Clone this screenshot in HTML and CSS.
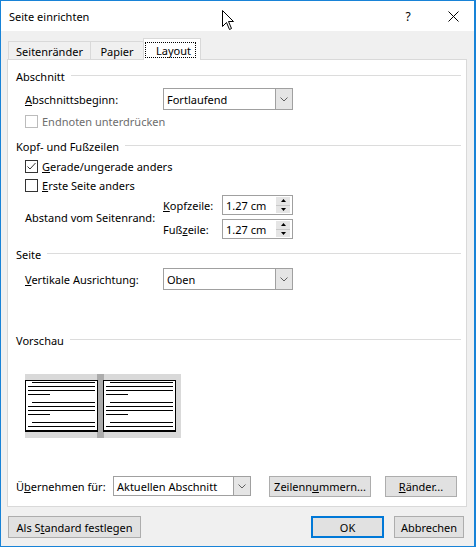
FILE: index.html
```html
<!DOCTYPE html>
<html lang="de">
<head>
<meta charset="utf-8">
<title>Seite einrichten</title>
<link rel="stylesheet" href="styles.css">
</head>
<body>
<div class="window">
  <div class="titlebar">
    <span class="title">Seite einrichten</span>
    <span class="cap-btn help">?</span>
    <span class="cap-btn close"><svg width="11" height="11" viewBox="0 0 11 11"><path d="M0.5 0.5L10.5 10.5M10.5 0.5L0.5 10.5" stroke="#000" stroke-width="1" fill="none"/></svg></span>
  </div>
  <div class="client">
    <div class="tabs">
      <div class="tab first">Seitenränder</div>
      <div class="tab mid">Papier</div>
      <div class="tab active"><span class="focus">Layout</span></div>
    </div>
    <div class="panel">
      <div class="group-head">Abschnitt</div>
      <div class="row r-sel1 indent">
        <span class="lbl"><u>A</u>bschnittsbeginn:</span>
        <div class="combo c130"><span class="combo-text">Fortlaufend</span><span class="combo-btn"><svg width="8" height="5" viewBox="0 0 8 5"><path d="M0.5 0.5L4 4L7.5 0.5" stroke="#606060" fill="none"/></svg></span></div>
      </div>
      <div class="row r-cb1 indent disabled">
        <span class="cb dis"></span><span>Endnoten unterdrücken</span>
      </div>

      <div class="group-head g2">Kopf- und Fußzeilen</div>
      <div class="row r-cb2 indent">
        <span class="cb"><svg width="11" height="11" viewBox="0 0 11 11"><path d="M1.5 5.5L4 8L9.5 2" stroke="#333" stroke-width="1" fill="none"/></svg></span><span><u>G</u>erade/ungerade anders</span>
      </div>
      <div class="row r-cb3 indent">
        <span class="cb"></span><span><u>E</u>rste Seite anders</span>
      </div>
      <div class="abstand indent">
        <span class="abstand-lbl">Abstand vom Seitenrand:</span>
        <span class="sub-lbl"><u>K</u>opfzeile:</span>
        <div class="spin"><span class="spin-text">1.27 cm</span><span class="spin-btns"><span class="spin-half up"><svg width="5" height="3" viewBox="0 0 5 3"><path d="M0 3L2.5 0L5 3Z" fill="#000"/></svg></span><span class="spin-half down"><svg width="5" height="3" viewBox="0 0 5 3"><path d="M0 0L2.5 3L5 0Z" fill="#000"/></svg></span></span></div>
        <span class="sub-lbl">Fuß<u>z</u>eile:</span>
        <div class="spin"><span class="spin-text">1.27 cm</span><span class="spin-btns"><span class="spin-half up"><svg width="5" height="3" viewBox="0 0 5 3"><path d="M0 3L2.5 0L5 3Z" fill="#000"/></svg></span><span class="spin-half down"><svg width="5" height="3" viewBox="0 0 5 3"><path d="M0 0L2.5 3L5 0Z" fill="#000"/></svg></span></span></div>
      </div>

      <div class="group-head g3">Seite</div>
      <div class="row r-sel2 indent">
        <span class="lbl"><u>V</u>ertikale Ausrichtung:</span>
        <div class="combo c130"><span class="combo-text">Oben</span><span class="combo-btn"><svg width="8" height="5" viewBox="0 0 8 5"><path d="M0.5 0.5L4 4L7.5 0.5" stroke="#606060" fill="none"/></svg></span></div>
      </div>

      <div class="group-head g4">Vorschau</div>
      <div class="preview indent">
        <svg width="156" height="64" viewBox="0 0 156 64" shape-rendering="crispEdges">
          <rect x="0" y="0" width="156" height="64" fill="#d9d9d9"/>
          <rect x="72" y="0" width="7" height="64" fill="#acacac"/>
          <g>
            <rect x="0" y="6" width="73" height="52" fill="#000"/>
            <rect x="1" y="7" width="71" height="49" fill="#fff"/>
            <rect x="7" y="8" width="63" height="1" fill="#000"/>
            <rect x="3" y="12" width="67" height="1" fill="#000"/>
            <rect x="3" y="16" width="67" height="1" fill="#000"/>
            <rect x="3" y="20" width="22" height="1" fill="#000"/>
            <rect x="7" y="28" width="63" height="1" fill="#000"/>
            <rect x="3" y="32" width="67" height="1" fill="#000"/>
            <rect x="3" y="36" width="67" height="1" fill="#000"/>
            <rect x="3" y="40" width="22" height="1" fill="#000"/>
            <rect x="7" y="48" width="63" height="1" fill="#000"/>
            <rect x="3" y="52" width="67" height="1" fill="#000"/>
          </g>
          <g transform="translate(78 0)">
            <rect x="0" y="6" width="73" height="52" fill="#000"/>
            <rect x="1" y="7" width="71" height="49" fill="#fff"/>
            <rect x="7" y="8" width="63" height="1" fill="#000"/>
            <rect x="3" y="12" width="67" height="1" fill="#000"/>
            <rect x="3" y="16" width="67" height="1" fill="#000"/>
            <rect x="3" y="20" width="22" height="1" fill="#000"/>
            <rect x="7" y="28" width="63" height="1" fill="#000"/>
            <rect x="3" y="32" width="67" height="1" fill="#000"/>
            <rect x="3" y="36" width="67" height="1" fill="#000"/>
            <rect x="3" y="40" width="22" height="1" fill="#000"/>
            <rect x="7" y="48" width="63" height="1" fill="#000"/>
            <rect x="3" y="52" width="67" height="1" fill="#000"/>
          </g>
        </svg>
      </div>

      <div class="row r-apply">
        <span class="apply-lbl">Ü<u>b</u>ernehmen für:</span>
        <div class="combo c138"><span class="combo-text">Aktuellen Abschnitt</span><span class="combo-btn"><svg width="8" height="5" viewBox="0 0 8 5"><path d="M0.5 0.5L4 4L7.5 0.5" stroke="#606060" fill="none"/></svg></span></div>
        <span class="btn b-zeilen">Zeilenn<u>u</u>mmern...</span>
        <span class="btn b-raender"><u>R</u>änder...</span>
      </div>
    </div>
    <div class="footer">
      <span class="btn b-standard">Als S<u>t</u>andard festlegen</span>
      <span class="btn default b-ok">OK</span>
      <span class="btn b-cancel">Abbrechen</span>
    </div>
  </div>
  <svg class="cursor" width="13" height="21" viewBox="0 0 13 21"><path d="M0.5 0.5L0.5 16.5L4.5 12.5L7.5 19.5L9.5 18.5L6.5 11.5L11.5 11.5Z" fill="#fff" stroke="#000" stroke-width="1" stroke-linejoin="miter"/></svg>
</div>
</body>
</html>
```

FILE: styles.css
```css
* {
  box-sizing: border-box;
}

html, body {
  margin: 0;
  padding: 0;
}

body {
  width: 476px;
  height: 547px;
  overflow: hidden;
  font-family: "Noto Sans", "Segoe UI", sans-serif;
  font-size: 11px;
  color: #000;
  background: #fff;
}

u {
  text-decoration: underline;
  text-underline-offset: 1px;
}

.window {
  position: relative;
  width: 476px;
  height: 547px;
  border: 1px solid #1883d7;
  border-right-width: 2px;
  background: #f0f0f0;
  display: flex;
  flex-direction: column;
}

.titlebar {
  flex: none;
  height: 30px;
  background: #fff;
  display: flex;
  align-items: center;
}

.title {
  flex: 1;
  padding-left: 8px;
  font-size: 11px;
}

.cap-btn {
  display: flex;
  align-items: center;
  justify-content: center;
  height: 30px;
}

.help {
  width: 48px;
  font-size: 12px;
}

.close {
  width: 42px;
}

.client {
  flex: 1;
  padding: 7px 0 0 6px;
  display: flex;
  flex-direction: column;
}

/* Tabs */
.tabs {
  position: relative;
  z-index: 1;
  display: flex;
  align-items: flex-end;
  height: 22px;
  margin-bottom: -1px;
  padding-left: 1px;
}

.tab {
  height: 19px;
  border: 1px solid #d9d9d9;
  border-left: none;
  background: #f0f0f0;
  display: flex;
  align-items: center;
  justify-content: center;
  padding-top: 1px;
}

.tab.first {
  width: 83px;
  border-left: 1px solid #d9d9d9;
}

.tab.mid {
  width: 53px;
}

.tab.active {
  width: 58px;
  height: 22px;
  margin-left: -1px;
  border-left: 1px solid #d9d9d9;
  border-bottom: none;
  background: #fff;
  justify-content: flex-start;
  align-items: flex-start;
  padding: 3px 0 0 1px;
}

.focus {
  display: flex;
  align-items: center;
  height: 16px;
  padding: 0 4px 0 10px;
  border: 1px dotted #000;
}

/* Panel */
.panel {
  width: 460px;
  height: 448px;
  border: 1px solid #d9d9d9;
  background: #fff;
  padding: 8px 5px 0 8px;
  display: flex;
  flex-direction: column;
}

.group-head {
  display: flex;
  align-items: center;
  height: 16px;
  gap: 6px;
}

.group-head::after {
  content: "";
  flex: 1;
  height: 1px;
  background: #dcdcdc;
  margin-top: -1px;
}

.g2 { margin-top: 9px; }
.g3 { margin-top: 7px; }
.g4 { margin-top: 42px; }

.indent {
  margin-left: 9px;
}

.row {
  display: flex;
  align-items: center;
}

.r-sel1 { margin-top: 4px; height: 22px; }
.r-cb1 { margin-top: 3px; height: 16px; }
.r-cb2 { margin-top: 4px; height: 16px; }
.r-cb3 { margin-top: 3px; height: 16px; }
.r-sel2 { margin-top: 6px; height: 22px; }

.lbl {
  width: 138px;
  flex: none;
}

.disabled {
  color: #6d6d6d;
}

.cb {
  flex: none;
  width: 13px;
  height: 13px;
  border: 1px solid #333;
  background: #fff;
  margin-right: 4px;
  display: flex;
  align-items: center;
  justify-content: center;
}

.cb.dis {
  border-color: #bcbcbc;
}

/* Combo box */
.combo {
  display: flex;
  height: 22px;
  border: 1px solid #a0a0a0;
  background: #fff;
  flex: none;
}

.c130 { width: 130px; }
.c138 { width: 138px; height: 20px; }

.combo-text {
  flex: 1;
  display: flex;
  align-items: center;
  padding-left: 3px;
}

.combo-btn {
  width: 17px;
  border-left: 1px solid #a0a0a0;
  background: #e5e5e5;
  display: flex;
  align-items: center;
  justify-content: center;
}

/* Abstand grid */
.abstand {
  margin-top: 2px;
  display: grid;
  grid-template-columns: 138px 59px 71px;
  grid-template-rows: 20px 20px;
  row-gap: 4px;
  align-items: center;
}

.abstand-lbl {
  grid-row: 1 / span 2;
  grid-column: 1;
  padding-top: 1px;
}

.spin {
  display: flex;
  width: 71px;
  height: 20px;
  border: 1px solid #a0a0a0;
  background: #fff;
}

.spin-text {
  flex: 1;
  display: flex;
  align-items: center;
  padding-left: 3px;
}

.spin-btns {
  width: 14px;
  margin: 1px 2px 1px 0;
  display: flex;
  flex-direction: column;
  background: #e5e5e5;
}

.spin-half {
  flex: 1;
  display: flex;
  align-items: center;
  justify-content: center;
}

.spin-half.up {
  border-bottom: 1px solid #c8c8c8;
}

/* Preview */
.preview {
  margin-top: 26px;
  height: 64px;
  display: flex;
}

/* Apply row */
.r-apply {
  margin-top: 37px;
  height: 22px;
}

.apply-lbl {
  width: 97px;
  flex: none;
}

.btn {
  flex: none;
  height: 22px;
  border: 1px solid #adadad;
  background: #e1e1e1;
  display: flex;
  align-items: center;
  justify-content: center;
}

.b-zeilen {
  width: 102px;
  margin-left: 18px;
  height: 21px;
}

.b-raender {
  width: 72px;
  margin-left: 14px;
  height: 21px;
}

/* Footer */
.footer {
  margin-top: 9px;
  display: flex;
  align-items: center;
}

.b-standard {
  width: 133px;
  margin-left: 1px;
}

.b-ok {
  width: 73px;
  margin-left: auto;
  border: 2px solid #0078d7;
}

.b-cancel {
  width: 70px;
  margin-left: 10px;
  margin-right: 10px;
}

.cursor {
  position: absolute;
  left: 221px;
  top: 9px;
}
```
